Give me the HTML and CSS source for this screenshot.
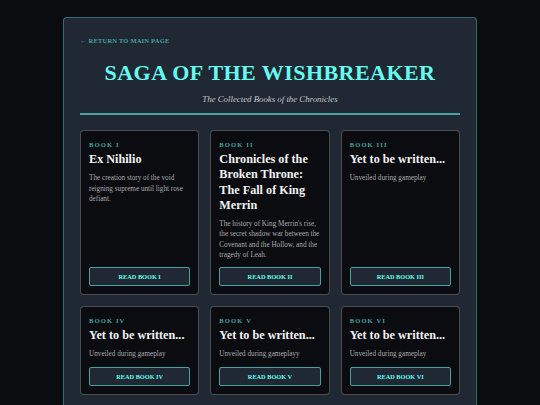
FILE: index.html
```html
<!DOCTYPE html>
<html lang="en">
<head>
  <meta charset="UTF-8">
  <meta name="viewport" content="width=device-width, initial-scale=1.0">
  <title>Saga of the Wishbreaker</title>
  <link rel="stylesheet" href="styles.css">
</head>
<body>

  <div class="saga-container">
    <a href="#" class="back-link">&larr; Return to main page</a>

    <header class="saga-header">
      <h1 class="saga-title">Saga of the Wishbreaker</h1>
      <p class="saga-subtitle">The Collected Books of the Chronicles</p>
    </header>

    <div class="book-grid">
      <div class="book-card">
        <span class="book-number">Book I</span>
        <h2 class="book-title">Ex Nihilio</h2>
        <p class="book-desc">The creation story of the void reigning supreme until light rose defiant.</p>
        <a href="#" class="read-button">Read Book I</a>
      </div>

      <div class="book-card">
        <span class="book-number">Book II</span>
        <h2 class="book-title">Chronicles of the Broken Throne: The Fall of King Merrin</h2>
        <p class="book-desc">The history of King Merrin's rise, the secret shadow war between the Covenant and the Hollow, and the tragedy of Leah.</p>
        <a href="#" class="read-button">Read Book II</a>
      </div>

      <div class="book-card">
        <span class="book-number">Book III</span>
        <h2 class="book-title">Yet to be written...</h2>
        <p class="book-desc">Unveiled during gameplay</p>
        <a href="#" class="read-button">Read Book III</a>
      </div>

      <div class="book-card">
        <span class="book-number">Book IV</span>
        <h2 class="book-title">Yet to be written...</h2>
        <p class="book-desc">Unveiled during gameplay</p>
        <a href="#" class="read-button">Read Book IV</a>
      </div>

      <div class="book-card">
        <span class="book-number">Book V</span>
        <h2 class="book-title">Yet to be written...</h2>
        <p class="book-desc">Unveiled during gameplayy</p>
        <a href="#" class="read-button">Read Book V</a>
      </div>

      <div class="book-card">
        <span class="book-number">Book VI</span>
        <h2 class="book-title">Yet to be written...</h2>
        <p class="book-desc">Unveiled during gameplay</p>
        <a href="#" class="read-button">Read Book VI</a>
      </div>
    </div>
  </div>

</body>
</html>
```

FILE: styles.css
```css
* {
  box-sizing: border-box;
}

body {
  margin: 0;
  padding: 17px 0 0;
  background: #0b0c10;
  color: #c5c6c7;
  font-family: "Liberation Serif", "DejaVu Serif", serif;
}

.saga-container {
  width: 414px;
  margin: 0 auto;
  padding: 18px 16px 20px;
  background: #1f2833;
  border: 1px solid rgba(69, 162, 158, 0.55);
  border-radius: 4px;
}

.back-link {
  display: block;
  font-size: 6.5px;
  line-height: 10px;
  font-weight: bold;
  letter-spacing: 0.2px;
  text-transform: uppercase;
  text-decoration: none;
  color: #45a29e;
  margin-bottom: 15px;
}

.back-link:hover {
  color: #66fcf1;
}

.saga-header {
  text-align: center;
  padding-bottom: 8px;
  border-bottom: 2px solid #45a29e;
  margin-bottom: 15px;
}

.saga-title {
  margin: 0;
  font-size: 22px;
  line-height: 24px;
  font-weight: bold;
  letter-spacing: 0.45px;
  text-transform: uppercase;
  color: #66fcf1;
}

.saga-subtitle {
  margin: 8px 0 0;
  font-size: 8.8px;
  line-height: 12px;
  font-style: italic;
  color: #c5c6c7;
}

.book-grid {
  display: grid;
  grid-template-columns: repeat(3, 1fr);
  gap: 11px;
}

.book-card {
  display: flex;
  flex-direction: column;
  padding: 9px 8px 8px;
  background: #0b0c10;
  border: 1px solid rgba(197, 198, 199, 0.35);
  border-radius: 4px;
}

.book-number {
  display: block;
  font-size: 6.6px;
  line-height: 9px;
  font-weight: bold;
  letter-spacing: 1.1px;
  text-transform: uppercase;
  color: #45a29e;
  margin-bottom: 3px;
}

.book-title {
  margin: 0 0 6px;
  font-size: 12.2px;
  line-height: 15.3px;
  font-weight: bold;
  color: #f2f2f2;
}

.book-desc {
  margin: 0 0 7px;
  font-size: 7.2px;
  line-height: 10.2px;
  color: #a9abad;
}

.read-button {
  display: block;
  margin-top: auto;
  height: 19px;
  line-height: 17px;
  text-align: center;
  font-size: 6.3px;
  font-weight: bold;
  text-transform: uppercase;
  text-decoration: none;
  color: #66fcf1;
  background: #1f2833;
  border: 1px solid #45a29e;
  border-radius: 2px;
}

.read-button:hover {
  background: #45a29e;
  color: #0b0c10;
}
```
